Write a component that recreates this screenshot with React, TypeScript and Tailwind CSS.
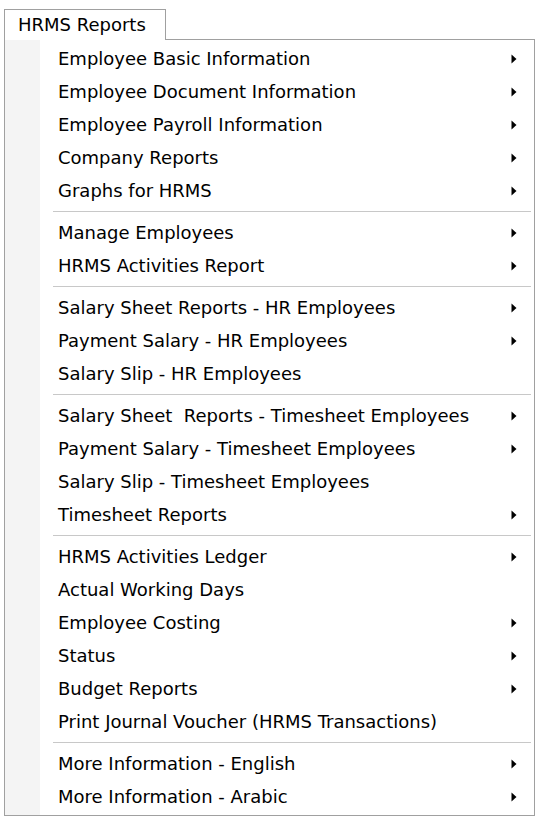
type Item = { label: string; sub?: boolean };

const groups: Item[][] = [
  [
    { label: "Employee Basic Information", sub: true },
    { label: "Employee Document Information", sub: true },
    { label: "Employee Payroll Information", sub: true },
    { label: "Company Reports", sub: true },
    { label: "Graphs for HRMS", sub: true },
  ],
  [
    { label: "Manage Employees", sub: true },
    { label: "HRMS Activities Report", sub: true },
  ],
  [
    { label: "Salary Sheet Reports - HR Employees", sub: true },
    { label: "Payment Salary - HR Employees", sub: true },
    { label: "Salary Slip - HR Employees" },
  ],
  [
    { label: "Salary Sheet\u00a0 Reports - Timesheet Employees", sub: true },
    { label: "Payment Salary - Timesheet Employees", sub: true },
    { label: "Salary Slip - Timesheet Employees" },
    { label: "Timesheet Reports", sub: true },
  ],
  [
    { label: "HRMS Activities Ledger", sub: true },
    { label: "Actual Working Days" },
    { label: "Employee Costing", sub: true },
    { label: "Status", sub: true },
    { label: "Budget Reports", sub: true },
    { label: "Print Journal Voucher (HRMS Transactions)" },
  ],
  [
    { label: "More Information - English", sub: true },
    { label: "More Information - Arabic", sub: true },
  ],
];

const Arrow = () => (
  <svg width="6" height="10" viewBox="0 0 6 10" className="block">
    <path d="M0.5 0.5 L5.5 5 L0.5 9.5 Z" fill="#000" />
  </svg>
);

export default function App() {
  return (
    <div
      className="w-[535px] h-[816px] bg-white text-black overflow-hidden"
      style={{ fontFamily: '"DejaVu Sans", Verdana, sans-serif' }}
    >
      <div className="pt-[9px] pl-[4px]">
        {/* tab */}
        <div className="relative z-10 w-[162px] h-[31px] -mb-px bg-white border border-b-0 border-[#a0a0a0] flex items-center pl-[13px] text-[18px] leading-none">
          HRMS Reports
        </div>
        {/* menu */}
        <div className="w-[531px] h-[777px] border border-[#a0a0a0] flex">
          <div className="w-[35px] bg-[#f4f4f4] shrink-0" />
          <div className="flex-1 pt-[2px]">
            {groups.map((g, gi) => (
              <div key={gi}>
                {gi > 0 && (
                  <div className="h-[9px] flex items-center pl-[13px] pr-[3px]">
                    <div className="h-px w-full bg-[#c8c8c8]" />
                  </div>
                )}
                {g.map((it) => (
                  <div
                    key={it.label}
                    className="h-[33px] flex items-center pl-[18px] pr-[17px] text-[18px] leading-none whitespace-pre"
                  >
                    <span className="flex-1">{it.label}</span>
                    {it.sub && <Arrow />}
                  </div>
                ))}
              </div>
            ))}
          </div>
        </div>
      </div>
    </div>
  );
}
